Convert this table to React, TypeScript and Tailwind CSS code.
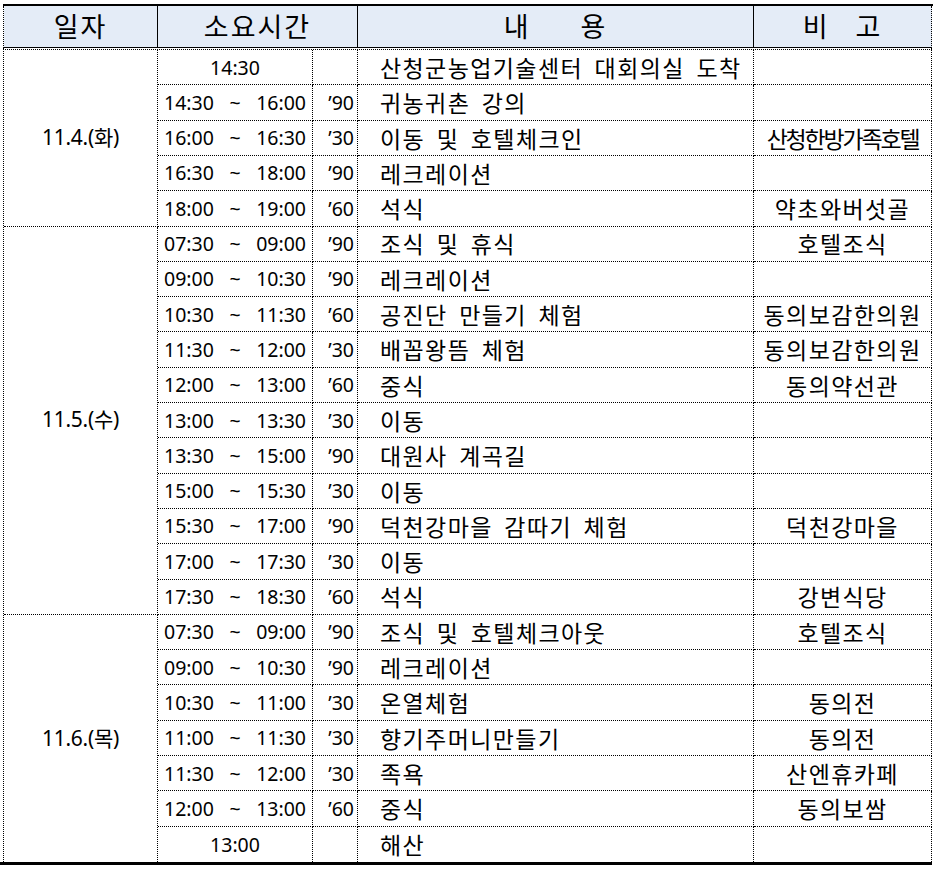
import React from "react";

type Row = { s: string; e?: string; m: string; c: string; r: string; tight?: boolean };

const groups: { d: string; span: string; rows: Row[] }[] = [
  {
    d: "11.4.(화)",
    span: "row-span-5",
    rows: [
      { s: "14:30", m: "", c: "산청군농업기술센터 대회의실 도착", r: "" },
      { s: "14:30", e: "16:00", m: "’90", c: "귀농귀촌 강의", r: "" },
      { s: "16:00", e: "16:30", m: "’30", c: "이동 및 호텔체크인", r: "산청한방가족호텔", tight: true },
      { s: "16:30", e: "18:00", m: "’90", c: "레크레이션", r: "" },
      { s: "18:00", e: "19:00", m: "’60", c: "석식", r: "약초와버섯골" },
    ],
  },
  {
    d: "11.5.(수)",
    span: "row-span-11",
    rows: [
      { s: "07:30", e: "09:00", m: "’90", c: "조식 및 휴식", r: "호텔조식" },
      { s: "09:00", e: "10:30", m: "’90", c: "레크레이션", r: "" },
      { s: "10:30", e: "11:30", m: "’60", c: "공진단 만들기 체험", r: "동의보감한의원" },
      { s: "11:30", e: "12:00", m: "’30", c: "배꼽왕뜸 체험", r: "동의보감한의원" },
      { s: "12:00", e: "13:00", m: "’60", c: "중식", r: "동의약선관" },
      { s: "13:00", e: "13:30", m: "’30", c: "이동", r: "" },
      { s: "13:30", e: "15:00", m: "’90", c: "대원사 계곡길", r: "" },
      { s: "15:00", e: "15:30", m: "’30", c: "이동", r: "" },
      { s: "15:30", e: "17:00", m: "’90", c: "덕천강마을 감따기 체험", r: "덕천강마을" },
      { s: "17:00", e: "17:30", m: "’30", c: "이동", r: "" },
      { s: "17:30", e: "18:30", m: "’60", c: "석식", r: "강변식당" },
    ],
  },
  {
    d: "11.6.(목)",
    span: "row-span-7",
    rows: [
      { s: "07:30", e: "09:00", m: "’90", c: "조식 및 호텔체크아웃", r: "호텔조식" },
      { s: "09:00", e: "10:30", m: "’90", c: "레크레이션", r: "" },
      { s: "10:30", e: "11:00", m: "’30", c: "온열체험", r: "동의전" },
      { s: "11:00", e: "11:30", m: "’30", c: "향기주머니만들기", r: "동의전" },
      { s: "11:30", e: "12:00", m: "’30", c: "족욕", r: "산엔휴카페" },
      { s: "12:00", e: "13:00", m: "’60", c: "중식", r: "동의보쌈" },
      { s: "13:00", m: "", c: "해산", r: "" },
    ],
  },
];

export default function App() {
  const cellB = "border-r border-b border-dotted border-black flex items-center min-w-0 overflow-hidden";
  const cellNB = "border-r border-dotted border-black flex items-center min-w-0 overflow-hidden";
  const hdr = "bg-[#e4ecf7] border-r border-b border-black flex items-center justify-center text-[27px] font-normal tracking-[2px]";
  return (
    <div className="w-[936px] h-[870px] bg-white pt-[4px] text-black font-['Noto_Sans_CJK_KR',sans-serif]">
      <div className="ml-[3px] w-[930px] h-[2px] bg-black" />
      <div className="ml-[3px] w-[929px]">
        <div className="grid grid-cols-[154px_200px_396px_178px] h-[42px] border-l border-dotted border-black">
          <div className={hdr}>일자</div>
          <div className={hdr}>소요시간</div>
          <div className={hdr}>
            <span>내</span>
            <span className="ml-[50px]">용</span>
          </div>
          <div className={hdr + " [border-right-style:dotted]"}>
            <span>비</span>
            <span className="ml-[26px]">고</span>
          </div>
        </div>
        <div className="h-[1px] border-l border-r border-dotted border-black" />
        <div className="grid grid-cols-[154px_155px_45px_396px_178px] grid-rows-[repeat(23,minmax(0,1fr))] h-[813px] border-l border-t border-dotted border-black">
          {groups.map((g, gi) => {
            const lastGroup = gi === groups.length - 1;
            return (
              <React.Fragment key={g.d}>
                <div
                  className={
                    (lastGroup ? cellNB : cellB) +
                    " " +
                    g.span +
                    " justify-center text-[21px] font-['Noto_Sans','Noto_Sans_CJK_KR',sans-serif] tracking-[-0.3px]"
                  }
                >
                  {g.d}
                </div>
                {g.rows.map((r, ri) => {
                  const last = lastGroup && ri === g.rows.length - 1;
                  const base = last ? cellNB : cellB;
                  return (
                    <React.Fragment key={gi + "-" + ri}>
                      {r.e ? (
                        <div className={base + " justify-between pl-[6px] pr-[6px] text-[19.5px] font-['Noto_Sans',sans-serif]"}>
                          <span>{r.s}</span>
                          <span>~</span>
                          <span>{r.e}</span>
                        </div>
                      ) : (
                        <div className={base + " justify-center text-[19.5px] font-['Noto_Sans',sans-serif]"}>{r.s}</div>
                      )}
                      <div className={base + " justify-end pr-[3px] text-[19.5px] font-['Noto_Sans',sans-serif]"}>{r.m}</div>
                      <div className={base + " pl-[22px] text-[23px] tracking-[1.4px] [word-spacing:5px] whitespace-nowrap"}>
                        {r.c}
                      </div>
                      <div
                        className={
                          base +
                          " justify-center text-[23px] whitespace-nowrap " +
                          (r.tight ? "tracking-[-2.2px]" : "tracking-[1.4px]")
                        }
                      >
                        {r.r}
                      </div>
                    </React.Fragment>
                  );
                })}
              </React.Fragment>
            );
          })}
        </div>
      </div>
      <div className="w-[932px] h-[3px] bg-black" />
    </div>
  );
}
